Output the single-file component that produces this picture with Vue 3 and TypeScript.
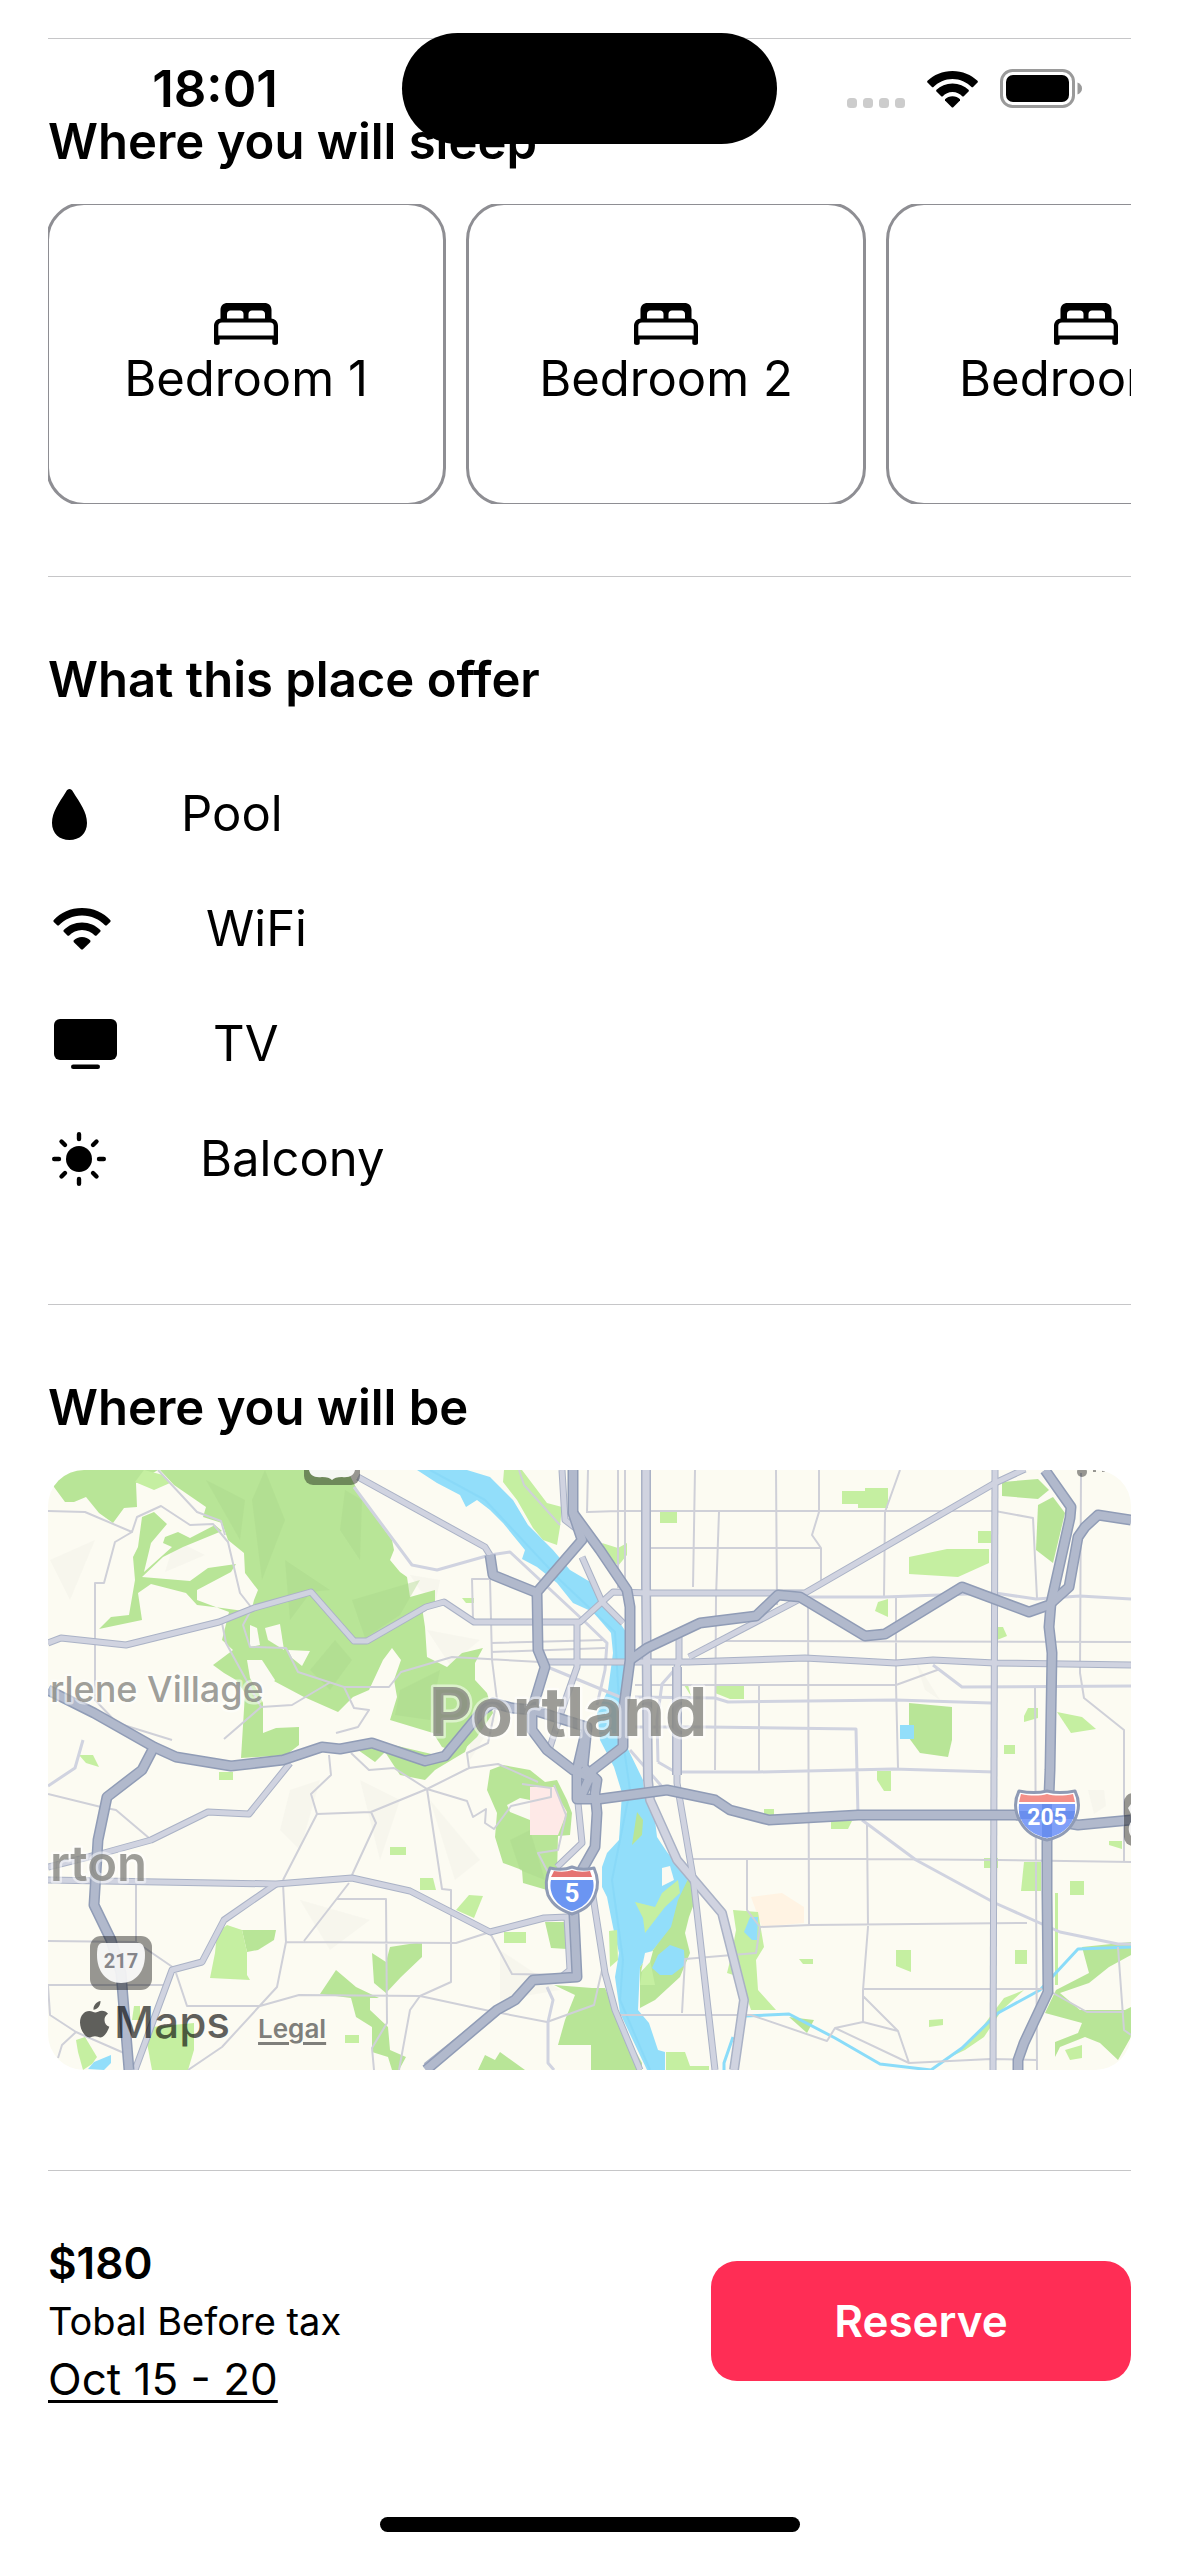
<script setup lang="ts">
interface Amenity {
  icon: 'drop' | 'wifi' | 'tv' | 'sun'
  label: string
}

const bedrooms: string[] = ['Bedroom 1', 'Bedroom 2', 'Bedroom 3']

const amenities: Amenity[] = [
  { icon: 'drop', label: 'Pool' },
  { icon: 'wifi', label: 'WiFi' },
  { icon: 'tv', label: 'TV' },
  { icon: 'sun', label: 'Balcony' },
]

// Wooded areas and large parks
const forests: string[] = [
  'M48 1470H158L136 1483 137 1507 124 1508 113 1523 99 1513 86 1497 74 1502H65L54 1487Z',
  'M160 1470 174 1485 206 1507 203 1517 222 1523 228 1540 244 1553 245 1573 258 1590 254 1600 251 1612 222 1608 197 1605 186 1593 151 1584 138 1593 142 1620 99 1629 111 1617 129 1615 135 1580 133 1557 138 1547 142 1517 154 1512 167 1524 151 1543 144 1572 172 1547 163 1543 165 1537 178 1532 190 1538 215 1525 222 1531 183 1547 163 1557 142 1577 190 1581 208 1568 236 1564 231 1572 197 1590V1600L229 1612 222 1640 233 1650 213 1665 224 1673 236 1680 245 1693 241 1758 286 1755 299 1745V1727L276 1728 263 1733V1703L256 1687 272 1680 304 1697 338 1712 353 1697 369 1690 383 1660 392 1648 401 1660 394 1680 397 1697 390 1720 433 1733 442 1747 460 1753 477 1737 493 1713 487 1693 475 1680V1663L483 1648 462 1653 447 1667 427 1657 425 1627 422 1607 435 1603V1590L410 1597 407 1577 400 1572 390 1560 394 1550 392 1540 361 1497 347 1470Z',
  'M358 1750 375 1762 385 1752 400 1775 425 1780 435 1770 465 1752 470 1738 440 1756 372 1740Z',
  'M490 1770 503 1765 530 1770 545 1782 557 1780 567 1800 572 1813 570 1835 558 1836 557 1873 547 1890 523 1883 522 1870 503 1863 495 1837 497 1813 487 1790Z',
  'M390 1947 422 1942V1957L401 1977 386 1993 374 1983 372 1953 386 1962Z',
  'M336 1970 356 1987 379 1998H370V2010L388 2027 390 2050 406 2057 399 2070H392L388 2057 372 2052V2027L356 2017 351 1998 320 1994Z',
  'M242 1930H276L274 1940 258 1950 247 1952Z',
  'M545 1922H567V1949L551 1948Z',
  'M554 1985 592 1988H605L620 2023 642 2063V2070H591V2045H558L565 2020 575 1995Z',
  'M478 2070 485 2055 495 2060 500 2052 525 2070Z',
  'M1002 1482 1038 1479 1049 1490 1038 1499 1002 1496Z',
  'M1038 1505 1053 1497 1065 1513 1053 1563 1036 1550Z',
  'M909 1703 952 1707V1740L948 1757 920 1753 909 1738Z',
  'M689 1877 698 1893 689 1917 685 1933 690 1953 680 1977 655 2000 640 2008V1967L653 1950 671 1927 678 1900Z',
  'M1056 1990 1089 1973 1082 1947 1131 1942V1955L1109 1967 1089 1983 1060 1993 1080 2010H1125L1131 2007V2037L1118 2060 1100 2043 1085 2037 1060 2047 1055 2057V2042L1078 2033 1082 2023 1045 2013Z',
  'M789 2017 814 2020 807 2033Z',
  'M637 1812 643 1820 642 1835 632 1845 635 1825Z',
]

// Smaller lawns, golf courses and neighbourhood parks
const lawns: string[] = [
  'M144 1470 163 1475 170 1483 154 1490 135 1482Z',
  'M504 1470H522L547 1503 562 1507 560 1527 557 1545 543 1540 533 1528 517 1500 503 1482Z',
  'M227 1925 242 1930 247 1952V1975L250 1980 210 1978 215 1953 217 1933Z',
  'M147 2043 151 2027 194 2023V2050L188 2070H152Z',
  'M76 2040 85 2037 97 2057 92 2064 83 2070 78 2052Z',
  'M504 1932H526V1943H504Z',
  'M456 1910 469 1895 483 1896 474 1918Z',
  'M420 1878H433L436 1890H420Z',
  'M390 1847H406V1855H390Z',
  'M79 1755H93L99 1767 86 1763Z',
  'M219 1772H233V1780H219Z',
  'M345 2035H359V2043H345Z',
  'M134 2006H140V2020H132Z',
  'M842 1491H865V1488H888V1508H858V1504H842Z',
  'M660 1511H677V1523H660Z',
  'M602 1543 618 1548 627 1543V1555L618 1566 608 1555Z',
  'M978 1531H991V1543H978Z',
  'M909 1557 947 1549H989V1563L958 1577 909 1574Z',
  'M878 1602 888 1599V1617L875 1611Z',
  'M997 1627H1003L1007 1636 997 1640Z',
  'M715 1685H744V1699H730L715 1693Z',
  'M684 1685H688L691 1696Z',
  'M462 1598H474V1603H466Z',
  'M1024 1716 1028 1708H1038V1718L1024 1722Z',
  'M1057 1712 1082 1717 1096 1729 1071 1733Z',
  'M1004 1745H1015V1754H1004Z',
  'M877 1771H891V1791H884L877 1780Z',
  'M764 1809H774V1815H764Z',
  'M831 1821H852L848 1829H831Z',
  'M984 1858H998V1868H984Z',
  'M1024 1862H1041V1891H1021Z',
  'M1070 1881H1084V1895H1070Z',
  'M1109 1841H1122V1849L1109 1845Z',
  'M733 1910 758 1912 764 1947 756 1960 758 1990 776 2010H751L740 1977 727 1973 731 1957 736 1930Z',
  'M896 1950H911V1972L896 1966Z',
  'M1015 1950H1027V1964H1015Z',
  'M799 1959H813V1964H803Z',
  'M929 2020 943 2019V2025L929 2027Z',
  'M1024 1990 1002 2010 984 2037 965 2050 944 2060 964 2046 980 2030 1004 1998Z',
  'M635 1902 655 1907 662 1893 678 1880 680 1893 665 1907 645 1933 643 1918Z',
  'M650 1960 642 1972 640 1985 655 1985Z',
  'M666 2052H685L690 2066H709V2070H666Z',
  'M1055 1893H1058V1985H1055Z',
  'M609 1931 617 1930 618 1960 610 1967Z',
  'M1065 2050 1082 2045V2058L1070 2060Z',
]

const clearings: string[] = [
  'M247 1660 262 1660 275 1680 263 1700 250 1678Z',
  'M250 1625 257 1628 260 1645 250 1647Z',
  'M265 1628 280 1624 284 1650 268 1640Z',
  'M288 1650 310 1651 302 1666 292 1658Z',
  'M507 1805 520 1798 530 1800V1820L510 1812Z',
  'M662 1868 670 1866 674 1880 662 1886Z',
  'M645 1953 653 1951 650 1962 641 1972Z',
]

const shadows: string[] = [
  'M265 1470 285 1520 262 1580 252 1500Z',
  'M345 1490 362 1500 360 1560 340 1530Z',
  'M285 1560 330 1590 311 1592 290 1620Z',
  'M352 1600 420 1580 400 1615 365 1638Z',
  'M206 1480 240 1540 245 1500Z',
  'M335 1640 352 1660 330 1690 310 1670Z',
  'M400 1690 440 1670 430 1720 395 1715Z',
  'M510 1840 530 1830 545 1880 520 1870Z',
]

const slopes: string[] = [
  'M410 1575 440 1580 436 1600 420 1590Z',
  'M427 1630 480 1640 450 1665Z',
  'M290 1790 320 1780 300 1850 280 1830Z',
  'M470 1700 495 1720 470 1760Z',
  'M50 1560 95 1540 70 1600Z',
  'M430 1800 480 1860 455 1880Z',
  'M1088 1790 1104 1790 1106 1806 1094 1814Z',
  'M175 1540 205 1555 165 1572Z',
  'M300 1900 370 1920 330 1950Z',
  'M500 1950 560 1990 500 2000Z',
  'M915 1660 940 1700 925 1690Z',
  'M360 1780 400 1800 380 1860Z',
]

const river =
  'M417 1470H467L490 1477 500 1487 513 1500 528 1525 553 1550 570 1570 592 1583 600 1600 620 1623 626 1632 630 1660 627 1747 643 1780 645 1797 655 1820 657 1837 667 1852 687 1877 689 1890 678 1903 673 1927 653 1950 640 1967 638 2010 649 2023 658 2050 665 2052V2070H647L620 2013 615 1977 619 1953 613 1927 607 1897 602 1887V1867L607 1853 619 1840 622 1793 614 1767 600 1740 597 1713 608 1690 613 1653 611 1633 593 1612 573 1603 557 1583 537 1567 522 1559 525 1550 503 1523 490 1510 477 1500 466 1507 460 1495 437 1483Z'

const ponds: string[] = [
  'M88 2069 94 2062 111 2055V2063L104 2070Z',
  'M900 1725H914V1739H900Z',
  'M744 1932 750 1917H758L757 1940H752Z',
  'M670 1945 684 1950 685 1965 672 1975H660L652 1968 658 1955Z',
]

const streams =
  'M745 2016 789 2014 835 2038 880 2064 931 2070 962 2048 998 2013 1040 1990 1078 1949 1131 1947M733 2037 724 2063V2070'

const streets =
  'M618 1470V1588M625 1470V1590M588 1470 587 1513M695 1470 693 1587M776 1470 777 1605M819 1470V1512L812 1535 821 1548V1580M900 1470 885 1512 884 1597M719 1512 716 1597 715 1770M588 1512 618 1511H995L1033 1518 1037 1598M649 1548H821M725 1641 1131 1642M896 1598V1685L898 1768M808 1600 809 1925M635 1685H896L940 1669M759 1685V1772M1081 1473 1080 1673 1084 1698 1124 1730V1862M1035 1687 1037 2070M693 1859H867L998 1860 1131 1862M747 1859V1910L760 1927 756 1953 685 1959 682 2013M760 1927 811 1925 1027 1923M867 1825 868 1927 863 1990V2022L835 2028 827 2041 751 2015H620M863 1989H1042M863 1996 898 2031 909 2063 835 2028M863 2022 898 2031M909 2063 991 2059 1037 2060M1053 1993 1087 2012H1124M1118 1947 1124 2030 1131 2035' +
  'M48 1511 85 1512 132 1532 137 1517 161 1506 190 1525 213 1524 228 1542 240 1593 251 1607M158 1470 197 1512 221 1521 225 1535M132 1532 115 1542 104 1583H95V1700L117 1723 172 1740M222 1623 226 1643 261 1707 292 1705 329 1683M251 1610 243 1625 250 1647 286 1648 298 1672 344 1687H389L401 1672 452 1657 540 1662M344 1687 354 1708 369 1710 358 1727 336 1733M261 1707 224 1739M473 1620 472 1579H490L492 1660 497 1700 488 1743 467 1753 469 1768M491 1643 605 1640M491 1652 605 1648' +
  'M48 1794 101 1807 116 1810 149 1838M48 1941 136 1942 174 1968M136 1883V1942M48 1985H163M48 1985 50 2015 76 2032 124 2053M58 2058 62 2045 76 2032M283 1884 286 1942 277 1987 222 2047 188 2070M176 1973 187 2006H260L299 1995 420 1996 485 2010 547 2022 594 2005 602 1970M286 1942 456 1943 490 1932M283 1880 317 1814 371 1812 427 1789 469 1768 498 1764 538 1782M317 1814 311 1794 331 1775 329 1755M371 1812 376 1823 352 1875M349 1883 304 1941M336 1899H386L387 2023 372 2048 374 2070M351 1753 369 1770 394 1768 427 1789 442 1889 451 1890V1982L420 1996 410 2010 399 2070M427 1789 467 1801 473 1817 486 1809 485 1823 494 1829 511 1806 551 1797V1788L522 1784M554 1785 566 1815 558 1850 538 1853 552 1880M490 1933 512 1974 565 1975M519 1470 524 1485 560 1525'

const avenues =
  'M354 1487 412 1565 437 1570 490 1555 510 1552 583 1620 607 1643 605 1670 597 1705M635 1697 715 1698 728 1702 896 1700 991 1703M635 1727H707L856 1729 858 1815M682 1772H758L893 1769 995 1772M809 1597H884L995 1593 1036 1599 1080 1596 1131 1599M933 1665 962 1687 1131 1686M862 1820 916 1860 995 1903 1060 1932 1118 1944H1131M83 1740 75 1768 48 1786M550 1668 620 1697M630 1750 665 1790M658 1762 677 1773M677 1667 662 1684 657 1720 658 1762M547 1987 553 2000 548 2022V2063L554 2070'

const arterials: string[] = [
  'M48 1643 61 1638 126 1645 219 1622 254 1608 311 1592 354 1641H367L426 1607 444 1602 474 1622H580L613 1592 650 1593H805L995 1483 1025 1469',
  'M358 1477 485 1547 490 1555',
  'M577 1623V1667L563 1707 550 1747',
  'M547 1662H689L805 1658 896 1663 933 1660 995 1663 1131 1665',
  'M679 1637V1662L677 1667V1783L693 1877 715 2070',
  'M689 1657 798 1600',
  'M995 1470 993 2070',
  'M582 1557 602 1602 623 1623',
  'M562 1470 565 1520 578 1530',
  'M48 1867 104 1853 151 1840 208 1812 249 1814 290 1763',
  'M48 1880 276 1884 352 1878 410 1891 490 1932 544 1918 567 1917 570 1970 560 1978',
  'M276 1884 224 1920 202 1962 172 1970 135 2070',
  'M592 1890 605 1973 615 2010 640 2070',
  'M578 1803 582 1843 557 1867',
  'M426 2066 500 2007',
]

const boulevards: string[] = [
  'M646 1470V1583L647 1693 648 1780 650 1800 677 1860 722 1913 744 2000 734 2070',
  'M677 1667V1775',
]

const highways: string[] = [
  'M48 1690 94 1713 154 1747 176 1757 231 1766 283 1760 322 1747 340 1749 372 1743 425 1761 445 1756 483 1710 493 1703 512 1708 533 1710 587 1727 583 1767',
  'M154 1747 142 1770 107 1797 98 1840 94 1905 111 1940 121 1973 129 2070',
  'M573 1470V1513L582 1540 537 1592 538 1650 545 1667 532 1710V1730L547 1750 573 1770 597 1780',
  'M573 1513 600 1550 627 1590 630 1607V1660L623 1713V1747L593 1770 580 1799',
  'M490 1555 493 1575 535 1592',
  'M583 1767 597 1780 595 1793 597 1813 595 1847 582 1870 572 1900 574 1915 577 1977 533 1980 515 2000 497 2010 426 2070',
  'M587 1727 577 1770V1799H600L667 1790 715 1800 730 1810 769 1820 858 1815H1016L1078 1825 1131 1820',
  'M630 1660 647 1648 700 1623 756 1616 778 1595 800 1597 865 1636 885 1634 962 1587 1029 1612 1049 1605 1069 1587 1078 1537 1085 1527 1098 1515 1131 1520',
  'M1045 1470 1071 1507 1070 1518 1051 1603 1049 1627 1052 1653 1050 1770 1047 1843V1893L1048 1992 1024 2043 1018 2060V2070',
]
</script>

<template>
  <div class="page">
    <header class="status">
      <time class="clock">18:01</time>
      <div class="island"></div>
      <div class="indicators">
        <svg class="signal" viewBox="0 0 58 10" aria-hidden="true">
          <rect v-for="n in 4" :key="n" :x="(n - 1) * 16" width="10" height="10" rx="3.5" fill="#cccccc" />
        </svg>
        <svg class="status-wifi" viewBox="0 0 51 37" aria-hidden="true">
          <path d="M25.500 0C35.500 0 44.200 3.800 50.500 9.800L51 11 45.800 16.200H44.800C39.700 11.200 33 8 25.500 8S11.300 11.200 6.200 16.200H5.200L0 11 .5 9.800C6.800 3.800 15.500 0 25.500 0Z" />
          <path d="M25.500 12.500C32 12.500 37.400 14.800 41.800 19V20.200L36.500 25.400H35.500C32.700 22.600 29.500 21 25.500 21S18.300 22.600 15.500 25.400H14.500L9.200 20.200V19C13.600 14.800 19 12.500 25.500 12.500Z" />
          <path d="M25.500 25.300C28.500 25.300 31 26.400 33 28.300V29.500L26 36.600H25L18 29.500V28.300C20 26.400 22.500 25.300 25.500 25.300Z" />
        </svg>
        <svg class="battery" viewBox="0 0 82 39" aria-hidden="true">
          <rect x="1.500" y="1.500" width="72" height="36" rx="11" fill="none" stroke="#9a9a9a" stroke-width="3" />
          <rect x="6" y="6" width="63" height="27" rx="7" />
          <path d="M77.500 13.500C80.500 14.600 82 16.800 82 19.500S80.500 24.400 77.500 25.500Z" fill="#9a9a9a" />
        </svg>
      </div>
    </header>

    <main>
      <section class="section">
        <h2>Where you will sleep</h2>
        <ul class="rooms">
          <li v-for="room in bedrooms" :key="room" class="room">
            <svg class="bed" viewBox="0 0 64 42" aria-hidden="true">
              <path fill-rule="evenodd" d="M6.500 17V7C6.500 2.500 9.500 0 13.500 0H50.500C54.500 0 57.500 2.500 57.500 7V17H51V11C51 9 49.500 7.500 47.500 7.500H38C36 7.500 34.500 9 34.500 11V17H29.500V11C29.500 9 28 7.500 26 7.500H16.500C14.500 7.500 13 9 13 11V17Z" />
              <path fill-rule="evenodd" d="M7.500 15.500H56.500C61 15.500 64 18.500 64 23V40C64 41.300 63 42 61 42S58.300 41.300 58.300 40V36.500H5.700V40C5.700 41.300 5 42 3 42S0 41.300 0 40V23C0 18.500 3 15.500 7.500 15.500ZM8 19.500C5.500 19.500 4.300 20.700 4.300 23V32.500H59.700V23C59.700 20.700 58.500 19.500 56 19.500Z" />
            </svg>
            <span>{{ room }}</span>
          </li>
        </ul>
      </section>

      <section class="section offers">
        <h2>What this place offer</h2>
        <ul class="amenities">
          <li v-for="item in amenities" :key="item.label">
            <svg v-if="item.icon === 'drop'" width="43" height="51" viewBox="0 0 43 51" aria-hidden="true">
              <path d="M21.500 0C23 0 24 1 25 2.700 32 14 39 23 39 34 39 44.500 31.500 51 21.500 51S4 44.500 4 34C4 23 11 14 18 2.700 19 1 20 0 21.500 0Z" />
            </svg>
            <svg v-else-if="item.icon === 'wifi'" width="68" height="42" viewBox="0 0 68 42" aria-hidden="true">
              <path d="M34 0C45.500 0 55.300 4.500 62.500 12.300V13.700L58.500 17.600H57.300C51 11 43.500 7.400 34 7.400S17 11 10.700 17.600H9.500L5.500 13.700V12.300C12.700 4.500 22.500 0 34 0Z" />
              <path d="M34 14.500C41.300 14.500 47.400 17.300 52.500 22.200V23.600L48.300 27.700H47.100C43.300 24 39.300 21.900 34 21.900S24.700 24 20.900 27.700H19.700L15.500 23.600V22.200C20.600 17.300 26.700 14.500 34 14.500Z" />
              <path d="M34 29C37.500 29 40 30.300 42.400 32.600V34L34.700 41.600H33.300L25.600 34V32.600C28 30.300 30.500 29 34 29Z" />
            </svg>
            <svg v-else-if="item.icon === 'tv'" width="75" height="50" viewBox="0 0 75 50" aria-hidden="true">
              <rect x="6" width="63" height="41" rx="6" />
              <rect x="23" y="45.500" width="29" height="4.500" rx="2.250" />
            </svg>
            <svg v-else width="62" height="54" viewBox="0 0 62 54" aria-hidden="true">
              <circle cx="31" cy="27" r="13" />
              <path d="M31 2.200V7M31 47V51.800M6.200 27H11M51 27H55.800M13.500 9.500 17 13M45 41 48.500 44.500M13.500 44.500 17 41M45 13 48.500 9.500" stroke="#000" stroke-width="4.400" stroke-linecap="round" />
            </svg>
            <span>{{ item.label }}</span>
          </li>
        </ul>
      </section>

      <section class="section place">
        <h2>Where you will be</h2>
        <div class="map">
          <svg class="map-art" viewBox="48 1470 1083 600" preserveAspectRatio="xMidYMid slice" role="img" aria-label="Map of Portland">
            <rect x="48" y="1470" width="1083" height="600" fill="#fcfbf2" />
            <path v-for="d in slopes" :key="d" :d="d" fill="#efede6" opacity="0.35" />
            <path d="M751 1897 782 1893 804 1907V1923L762 1927Z" fill="#fff3e3" />
            <path :d="river" fill="#92defa" />
            <path d="M430 1470 485 1500 560 1580 615 1632 620 1720 630 1790 612 1880 623 1960 620 2000 650 2070" class="current" />
            <path v-for="d in forests" :key="d" :d="d" fill="#b8e597" />
            <path v-for="d in shadows" :key="d" :d="d" fill="#a9d78b" opacity="0.4" />
            <path v-for="d in lawns" :key="d" :d="d" fill="#c5efa1" />
            <path v-for="d in clearings" :key="d" :d="d" fill="#fbfaf2" />
            <path v-for="d in ponds" :key="d" :d="d" fill="#92defa" />
            <path d="M530 1787H555L560 1800 567 1812 558 1835H530Z" fill="#fee9e7" />
            <path :d="streams" fill="none" stroke="#8adcf9" stroke-width="3" />
            <path :d="streets" class="street" />
            <path :d="avenues" class="avenue" />
            <path v-for="d in arterials" :key="'c' + d" :d="d" class="arterial-edge" />
            <path v-for="d in boulevards" :key="'c' + d" :d="d" class="boulevard-edge" />
            <path v-for="d in arterials" :key="'f' + d" :d="d" class="arterial" />
            <path v-for="d in boulevards" :key="'f' + d" :d="d" class="boulevard" />
            <path v-for="d in highways" :key="'c' + d" :d="d" class="highway-edge" />
            <path v-for="d in highways" :key="'f' + d" :d="d" class="highway" />

            <g fill="#000" fill-opacity="0.4">
              <rect x="304" y="1440" width="56" height="45" rx="9" />
              <rect x="90" y="1936" width="62" height="54" rx="11" />
              <rect x="1124" y="1793" width="60" height="53" rx="9" />
              <circle cx="1082" cy="1472" r="5" />
              <path d="M1093 1470H1096V1472H1093ZM1102 1470H1105V1472H1102Z" />
            </g>
            <path d="M309 1470H355C354 1475 350 1478 342 1477 337 1477 334 1478 332 1480 330 1478 327 1477 322 1477 314 1478 310 1475 309 1470Z" fill="#fff" fill-opacity="0.93" />
            <path d="M102 1943H139C143 1943 145 1948 145 1955 145 1971 136 1983 121 1983S97 1971 97 1955C97 1948 98 1943 102 1943Z" fill="#fff" fill-opacity="0.9" />
            <path d="M1131 1804 1128 1808 1131 1814V1822C1128 1826 1128 1832 1131 1836Z" fill="#fff" fill-opacity="0.9" />
            <text x="121" y="1968" class="route route-grey">217</text>

            <g stroke-linejoin="round">
              <path d="M550 1868C558 1870 565 1870 572 1867 579 1870 586 1870 594 1868 598 1877 599 1886 595 1895 591 1905 584 1910 572 1914 560 1910 553 1905 548 1895 545 1886 546 1877 550 1868Z" fill="#fff" stroke="#8f9bb5" stroke-width="3" />
              <path d="M551 1880H593C596 1894 587 1907 572 1911 557 1907 548 1894 551 1880Z" fill="#6b95f2" />
              <path d="M554 1871C560 1872 567 1872 572 1870 577 1872 584 1872 590 1871L592 1877H551Z" fill="#e57473" />
              <path d="M1019 1791C1029 1793 1039 1793 1047 1791 1055 1793 1065 1793 1075 1791 1080 1801 1079 1812 1074 1821 1068 1832 1060 1837 1047 1840 1034 1837 1026 1832 1020 1821 1015 1812 1014 1801 1019 1791Z" fill="#fff" stroke="#8f9bb5" stroke-width="3" />
              <path d="M1019 1804H1075C1077 1821 1066 1834 1047 1838 1028 1834 1017 1821 1019 1804Z" fill="#7f9ff8" />
              <path d="M1021 1794C1030 1796 1040 1796 1047 1794 1054 1796 1064 1796 1073 1794L1075 1802H1019Z" fill="#f39089" />
              <path d="M1042 1804H1052V1837H1042ZM1019 1811H1075L1074 1819H1020Z" fill="#5f88ea" fill-opacity="0.7" />
            </g>
            <text x="572" y="1902" class="route route-five">5</text>
            <text x="1047" y="1825" class="route">205</text>

            <text x="50" y="1702" class="place-name village">rlene Village</text>
            <text x="50" y="1881" class="place-name town">rton</text>
            <text x="568" y="1736" class="place-name city">Portland</text>
          </svg>
          <div class="attribution">
            <svg class="apple" viewBox="0 0 30 37" aria-hidden="true">
              <path d="M20.500 0C20.800 4.600 17.200 8.700 13.500 8.700 13 4.700 16.600.6 20.500 0ZM28 12.700C25.700 14.200 24.500 16.200 24.500 19 24.500 22.200 26.300 24.600 29.300 25.800 28 29.700 24.500 36.500 20.500 36.500 18.500 36.500 17.400 35.300 15 35.300S11.300 36.500 9.500 36.500C5 36.500 0 28.500 0 21.500 0 14.700 4.300 10 9.300 10 11.900 10 13.700 11.600 15.300 11.600S18.900 9.700 22 9.700C24.500 9.700 26.600 10.800 28 12.700Z" />
            </svg>
            <span class="maps">Maps</span>
            <a href="#legal" class="legal">Legal</a>
          </div>
        </div>
      </section>
    </main>

    <footer class="booking">
      <div class="price">
        <strong>$180</strong>
        <span class="note">Tobal Before tax</span>
        <a href="#dates" class="dates">Oct 15 - 20</a>
      </div>
      <button type="button" class="reserve">Reserve</button>
    </footer>
    <div class="home-indicator"></div>
  </div>
</template>

<style>
body {
  margin: 0;
  background: #fff;
}
</style>

<style scoped>
.page {
  position: relative;
  box-sizing: border-box;
  padding: 38px 48px 24px;
  font-family: Inter, "Liberation Sans", sans-serif;
  font-size: 49px;
  line-height: 60px;
  color: #000;
  background: #fff;
}

.status {
  position: absolute;
  z-index: 2;
  top: 33px;
  left: 0;
  right: 0;
  display: grid;
  grid-template-columns: 1fr 375px 1fr;
  align-items: center;
}

.clock {
  padding-left: 28px;
  text-align: center;
  font-size: 51px;
  font-weight: 600;
}

.island {
  height: 111px;
  border-radius: 56px;
  background: #000;
}

.indicators {
  display: flex;
  align-items: flex-end;
  justify-content: center;
  padding-right: 28px;
}

.signal {
  width: 58px;
  height: 10px;
  margin-right: 22px;
}

.status-wifi {
  width: 51px;
  height: 37px;
  margin-right: 22px;
}

.battery {
  width: 82px;
  height: 39px;
}

.section {
  padding: 73px 0 72px;
  border-top: 1px solid #c6c6c8;
}

h2 {
  margin: 0 0 32px;
  font-size: 49px;
  line-height: 60px;
  font-weight: 600;
}

ul {
  margin: 0;
  padding: 0;
  list-style: none;
}

.rooms {
  display: flex;
  gap: 24px;
  overflow: hidden;
}

.room {
  box-sizing: border-box;
  flex: none;
  display: flex;
  flex-direction: column;
  align-items: center;
  justify-content: center;
  gap: 4px;
  width: 396px;
  height: 300px;
  padding-top: 4px;
  border-radius: 36px;
  outline: 3px solid #8e8e93;
  outline-offset: -1px;
}

.bed {
  width: 64px;
  height: 42px;
}

.offers {
  padding-bottom: 115px;
}

.amenities {
  display: flex;
  flex-direction: column;
  gap: 55px;
  padding-top: 42px;
}

.amenities li {
  display: flex;
  align-items: center;
  gap: 90px;
}

.amenities svg {
  display: block;
}

.place {
  padding-bottom: 100px;
}

.map {
  position: relative;
  height: 600px;
  border-radius: 36px;
  overflow: hidden;
}

.map-art {
  display: block;
  width: 100%;
  height: 100%;
}

.map-art path {
  stroke-linejoin: round;
}

.current {
  fill: none;
  stroke: #84d6f6;
  stroke-width: 2px;
  opacity: 0.6;
}

.street {
  fill: none;
  stroke: #cfd0d8;
  stroke-width: 2px;
}

.avenue {
  fill: none;
  stroke: #d0d3e0;
  stroke-width: 3px;
}

.arterial-edge {
  fill: none;
  stroke: #aab2c6;
  stroke-width: 7px;
}

.arterial {
  fill: none;
  stroke: #d0d3e0;
  stroke-width: 5px;
}

.boulevard-edge {
  fill: none;
  stroke: #aab2c6;
  stroke-width: 10px;
}

.boulevard {
  fill: none;
  stroke: #d0d3e0;
  stroke-width: 7px;
}

.highway-edge {
  fill: none;
  stroke: #909cb6;
  stroke-width: 11px;
}

.highway {
  fill: none;
  stroke: #b1b9cc;
  stroke-width: 8px;
}

.place-name {
  fill: #858580;
  stroke: #fff;
  stroke-opacity: 0.5;
  stroke-width: 5px;
  paint-order: stroke;
  stroke-linejoin: round;
  fill-opacity: 0.8;
}

.village {
  font-size: 36px;
  font-weight: 500;
}

.town {
  font-size: 49px;
  font-weight: 600;
}

.city {
  font-size: 67px;
  font-weight: 700;
  text-anchor: middle;
}

.route {
  font-family: Roboto, "Liberation Sans", sans-serif;
  font-size: 23px;
  font-weight: 700;
  text-anchor: middle;
  fill: #fff;
}

.route-grey {
  font-size: 20px;
  fill: #85858a;
}

.route-five {
  font-size: 26px;
}

.attribution {
  position: absolute;
  left: 32px;
  bottom: 14px;
  display: flex;
  align-items: baseline;
  line-height: 54px;
  color: #000;
}

.apple {
  width: 30px;
  height: 37px;
  margin-right: 4px;
  opacity: 0.62;
}

.maps {
  font-size: 44px;
  font-weight: 500;
  opacity: 0.62;
}

.legal {
  margin-left: 28px;
  font-size: 26px;
  font-weight: 600;
  color: #7f7f7b;
  text-decoration-thickness: 3px;
  text-underline-offset: 4px;
}

.booking {
  display: flex;
  align-items: center;
  justify-content: space-between;
  padding: 65px 0 111px;
  border-top: 1px solid #c6c6c8;
}

.price {
  display: flex;
  flex-direction: column;
  align-items: flex-start;
  gap: 8px;
  font-size: 44px;
  line-height: 54px;
}

.price strong {
  font-weight: 600;
}

.note {
  font-size: 38px;
  line-height: 46px;
}

.dates {
  color: inherit;
  text-decoration-thickness: 3px;
  text-underline-offset: 5px;
  text-decoration-skip-ink: none;
}

.reserve {
  width: 420px;
  height: 120px;
  border: 0;
  border-radius: 26px;
  background: #ff2d55;
  color: #fff;
  font-family: inherit;
  font-size: 44px;
  font-weight: 600;
}

.home-indicator {
  width: 420px;
  height: 15px;
  margin: 0 auto;
  border-radius: 8px;
  background: #000;
}
</style>
